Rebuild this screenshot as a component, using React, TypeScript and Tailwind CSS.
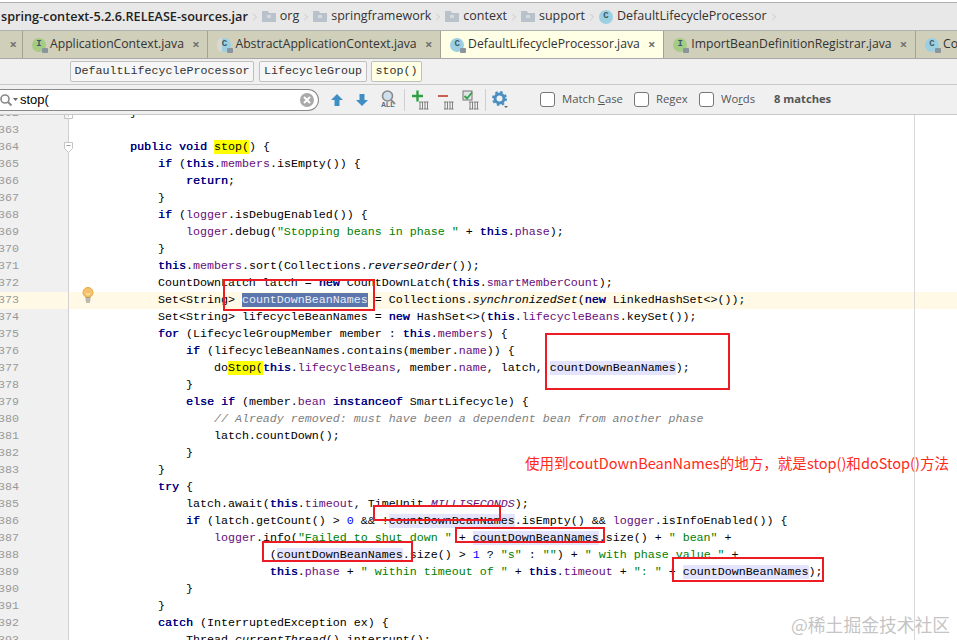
import type { ReactNode } from 'react'
import { ChevronRight } from 'lucide-react'

type Tok = string | [string, string]

const KW = 'text-[#000080] [text-shadow:0.3px_0_0_#000080]'
const FLD = 'text-[#660e7a]'
const STR = 'text-[#008000]'
const NUM = 'text-[#0000ff]'
const ITA = 'italic'
const CMT = 'italic text-[#808080]'
const HIT = 'bg-[#ffff00]'
const USE = 'bg-[#e4e4ff]'
const SEL = 'bg-[#5b76ad] text-[#e8edf8]'

const NAME = 'countDownBeanNames'

const LINES: Tok[][] = [
  ['        }'],
  [],
  ['        ', ['public void ', KW], ['stop(', HIT], ') {'],
  ['            ', ['if ', KW], '(', ['this', KW], '.', ['members', FLD], '.isEmpty()) {'],
  ['                ', ['return', KW], ';'],
  ['            }'],
  ['            ', ['if ', KW], '(', ['logger', FLD], '.isDebugEnabled()) {'],
  ['                ', ['logger', FLD], '.debug(', ['"Stopping beans in phase "', STR], ' + ', ['this', KW], '.', ['phase', FLD], ');'],
  ['            }'],
  ['            ', ['this', KW], '.', ['members', FLD], '.sort(Collections.', ['reverseOrder', ITA], '());'],
  ['            CountDownLatch latch = ', ['new ', KW], 'CountDownLatch(', ['this', KW], '.', ['smartMemberCount', FLD], ');'],
  ['            Set<String> ', [NAME, SEL], ' = Collections.', ['synchronizedSet', ITA], '(', ['new ', KW], 'LinkedHashSet<>());'],
  ['            Set<String> lifecycleBeanNames = ', ['new ', KW], 'HashSet<>(', ['this', KW], '.', ['lifecycleBeans', FLD], '.keySet());'],
  ['            ', ['for ', KW], '(LifecycleGroupMember member : ', ['this', KW], '.', ['members', FLD], ') {'],
  ['                ', ['if ', KW], '(lifecycleBeanNames.contains(member.', ['name', FLD], ')) {'],
  ['                    do', ['Stop(', HIT], ['this', KW], '.', ['lifecycleBeans', FLD], ', member.', ['name', FLD], ', latch, ', [NAME, USE], ');'],
  ['                }'],
  ['                ', ['else if ', KW], '(member.', ['bean ', FLD], ['instanceof ', KW], 'SmartLifecycle) {'],
  ['                    ', ['// Already removed: must have been a dependent bean from another phase', CMT]],
  ['                    latch.countDown();'],
  ['                }'],
  ['            }'],
  ['            ', ['try ', KW], '{'],
  ['                latch.await(', ['this', KW], '.', ['timeout', FLD], ', TimeUnit.', ['MILLISECONDS', `${ITA} ${FLD}`], ');'],
  ['                ', ['if ', KW], '(latch.getCount() > ', ['0', NUM], ' && !', [NAME, USE], '.isEmpty() && ', ['logger', FLD], '.isInfoEnabled()) {'],
  ['                    ', ['logger', FLD], '.info(', ['"Failed to shut down "', STR], ' + ', [NAME, USE], '.size() + ', ['" bean"', STR], ' +'],
  ['                            (', [NAME, USE], '.size() > ', ['1', NUM], ' ? ', ['"s"', STR], ' : ', ['""', STR], ') + ', ['" with phase value "', STR], ' +'],
  ['                            ', ['this', KW], '.', ['phase', FLD], ' + ', ['" within timeout of "', STR], ' + ', ['this', KW], '.', ['timeout', FLD], ' + ', ['": "', STR], ' + ', [NAME, USE], ');'],
  ['                }'],
  ['            }'],
  ['            ', ['catch ', KW], '(InterruptedException ex) {'],
  ['                Thread.', ['currentThread', ITA], '().interrupt();'],
]

function Crumb({ children, icon }: { children: ReactNode; icon?: ReactNode }) {
  return (
    <div className="flex items-center shrink-0">
      {icon}
      <span>{children}</span>
      <ChevronRight className="mx-[1px] h-[24px] w-[12px] text-[#a8a8a8]" strokeWidth={1} />
    </div>
  )
}

function Folder() {
  return (
    <svg width="14" height="11" viewBox="0 0 14 11" className="mr-[4px]">
      <path d="M0 0h6l1 2h7v9H0z" fill="#b9c2ca" />
      <rect x="5" y="4" width="4" height="3" fill="#d5dade" />
    </svg>
  )
}

function ClassIcon({ letter = 'C', tone = '#9ccfe0', lock, split }: { letter?: string; tone?: string; lock?: boolean; split?: boolean }) {
  return (
    <span className="relative mr-[4px] inline-flex h-[14px] w-[14px] shrink-0 items-center justify-center rounded-full" style={{ background: tone }}>
      {split && <span className="absolute left-0 top-0 h-full w-[5px] rounded-l-full bg-[#d8d8d0]" />}
      <span className="relative font-['Liberation_Mono'] text-[9px] font-bold leading-none text-[#3a5a68]">{letter}</span>
      {lock && <span className="absolute bottom-[-1px] right-[-2px] h-[5px] w-[6px] rounded-[1px] bg-[#8a949c]" />}
    </span>
  )
}

function Tab({ name, icon, active }: { name: string; icon: ReactNode; active?: boolean }) {
  return (
    <div className={`flex h-[27px] shrink-0 items-center border-r border-[#a3a394] pl-[9px] pr-[7.5px] ${active ? 'bg-[#ffffe6]' : 'bg-[#d0cfba]'}`}>
      {icon}
      <span className="text-[#333]">{name}</span>
      <span className="ml-[8px] w-[8px] text-center text-[13px] font-bold leading-none text-[#707070]">×</span>
    </div>
  )
}

function NavChip({ children, width, active }: { children: ReactNode; width: string; active?: boolean }) {
  return (
    <span className={`flex h-[21px] items-center justify-center rounded-[2px] border border-[#c0c0c0] font-['Liberation_Mono'] text-[11.67px] text-[#333] ${width} ${active ? 'bg-[#ffffe6]' : 'bg-[#f6f6f6]'}`}>
      {children}
    </span>
  )
}

function Check({ label, width }: { label: ReactNode; width: string }) {
  return (
    <div className={`flex items-center ${width}`}>
      <span className="mr-[7px] h-[15px] w-[15px] rounded-[3px] border border-[#777] bg-white" />
      <span className="text-[11.3px] text-[#555]">{label}</span>
    </div>
  )
}

function Arrow({ up }: { up?: boolean }) {
  return (
    <svg width="14" height="14" viewBox="0 0 14 14">
      <path d={up ? 'M7 1l6 6H9.500v6h-5V7H1z' : 'M7 13l6-6H9.500V1h-5v6H1z'} fill="#3f8fc4" />
    </svg>
  )
}

function RowIcon({ children }: { children: ReactNode }) {
  return (
    <svg width="17" height="20" viewBox="0 0 17 20">
      {children}
      <path d="M8 12v7M10.500 12v7M7 12h4.500M7 19h4.500M13 12v7M15.500 12v7M12 12h4.500M12 19h4.500" stroke="#666" strokeWidth="0.8" fill="none" />
    </svg>
  )
}

function RedBox({ className }: { className: string }) {
  return <div className={`pointer-events-none absolute border-2 border-[#ed1c24] ${className}`} />
}

export default function App() {
  return (
    <div className="relative h-[640px] w-[957px] overflow-hidden bg-white font-['Open_Sans','Liberation_Sans',sans-serif]">
      {/* breadcrumbs */}
      <div className="mt-[2px] flex h-[29px] items-center overflow-hidden border-y border-[#b0b0b0] bg-[#e8e8e8] pl-px text-[12.5px] text-[#333]">
        <Crumb><b className="text-[12.65px] font-semibold text-[#222]">spring-context-5.2.6.RELEASE-sources.jar</b></Crumb>
        <Crumb icon={<Folder />}>org</Crumb>
        <Crumb icon={<Folder />}>springframework</Crumb>
        <Crumb icon={<Folder />}>context</Crumb>
        <Crumb icon={<Folder />}>support</Crumb>
        <Crumb icon={<ClassIcon />}>DefaultLifecycleProcessor</Crumb>
      </div>

      {/* editor tabs */}
      <div className="flex h-[28px] overflow-hidden border-b border-[#a8a8a8] bg-[#d0cfba] text-[12.2px]">
        <div className="flex w-[23px] shrink-0 items-center justify-end border-r border-[#a3a394] pr-[5px] text-[13px] font-bold text-[#707070]">×</div>
        <Tab name="ApplicationContext.java" icon={<ClassIcon letter="I" tone="#a6cb85" lock />} />
        <Tab name="AbstractApplicationContext.java" icon={<ClassIcon split lock />} />
        <Tab name="DefaultLifecycleProcessor.java" icon={<ClassIcon lock />} active />
        <Tab name="ImportBeanDefinitionRegistrar.java" icon={<ClassIcon letter="I" tone="#a6cb85" lock />} />
        <div className="flex items-center pl-[9px]"><ClassIcon lock /><span className="text-[#333]">Co</span></div>
      </div>

      {/* navigation path */}
      <div className="flex h-[26px] items-center border-b border-[#c8c8c8] bg-[#f0f0f0] pl-[70px]">
        <NavChip width="w-[184px]">DefaultLifecycleProcessor</NavChip>
        <span className="w-[5px]" />
        <NavChip width="w-[108px]">LifecycleGroup</NavChip>
        <span className="w-[4px]" />
        <NavChip width="w-[51px]" active>stop()</NavChip>
      </div>

      {/* find bar */}
      <div className="flex h-[30px] items-center border-b border-[#c8c8c8] bg-[#f0f0f0]">
        <div className="flex h-[22px] w-[319px] shrink-0 items-center rounded-r-full border border-l-0 border-[#8a8a8a] bg-white pr-[3px]">
          <svg width="19" height="14" viewBox="0 0 19 14" className="shrink-0">
            <circle cx="5" cy="6" r="4" fill="none" stroke="#888" strokeWidth="1.600" />
            <path d="M8 9l3.500 3.500" stroke="#888" strokeWidth="2" />
            <path d="M13 5h5l-2.500 3z" fill="#666" />
          </svg>
          <span className="ml-[1px] flex-1 font-['Liberation_Sans'] text-[13px] text-black">stop(</span>
          <svg width="16" height="16" viewBox="0 0 16 16">
            <circle cx="8" cy="8" r="7" fill="#aaa" />
            <path d="M5 5l6 6M11 5l-6 6" stroke="#fff" strokeWidth="2" />
          </svg>
        </div>
        <div className="ml-[11px] flex items-center gap-[11px]">
          <Arrow up />
          <Arrow />
          <svg width="17" height="19" viewBox="0 0 17 19">
            <circle cx="7.500" cy="6" r="5" fill="#cfe0ec" stroke="#8a8a8a" strokeWidth="1.600" />
            <path d="M11 10l4 4" stroke="#8a8a8a" strokeWidth="2" />
            <text x="1" y="17" fontSize="7" fontWeight="700" fill="#4a6f8c" fontFamily="Liberation Sans">ALL</text>
          </svg>
        </div>
        <span className="ml-[7px] h-[22px] w-px bg-[#cfcfcf]" />
        <div className="ml-[7px] flex items-center gap-[8px]">
          <RowIcon><path d="M0 6h11M5.500.500v11" stroke="#2f9e44" strokeWidth="2.400" /></RowIcon>
          <RowIcon><path d="M1 6h10" stroke="#c8604f" strokeWidth="2" /></RowIcon>
          <RowIcon>
            <rect x="1" y="1" width="9" height="9" fill="#dfe3e3" stroke="#777" />
            <path d="M2.500 6l2.500 2.500 5-6" stroke="#2f9e44" strokeWidth="1.800" fill="none" />
          </RowIcon>
        </div>
        <span className="ml-[6px] h-[22px] w-px bg-[#cfcfcf]" />
        <svg width="17" height="17" viewBox="0 0 17 17" className="ml-[6px]">
          <circle cx="7.500" cy="7.500" r="4.500" fill="none" stroke="#4a8fc0" strokeWidth="3" />
          <circle cx="7.500" cy="7.500" r="6.500" fill="none" stroke="#4a8fc0" strokeWidth="2" strokeDasharray="2.500 2.600" />
          <path d="M12 15h4l-2 2z" fill="#666" />
        </svg>
        <div className="ml-[31px] flex items-center">
          <Check width="w-[94px]" label={<>Match <u>C</u>ase</>} />
          <Check width="w-[65px]" label={<>Re<u>g</u>ex</>} />
          <Check width="w-[75px]" label={<>Wo<u>r</u>ds</>} />
        </div>
        <span className="text-[11.2px] font-bold text-[#555]">8 matches</span>
      </div>

      {/* editor */}
      <div className="relative h-[525px] overflow-hidden">
        <div className="-mt-[10px] font-['Liberation_Mono'] text-[11.67px] leading-[17px] text-black">
          {LINES.map((line, i) => (
            <div key={i} className={`flex h-[17px] ${i + 362 === 373 ? 'bg-[#fff9e6]' : ''}`}>
              <div className={`h-[17px] w-[69px] shrink-0 overflow-hidden border-r border-[#d0d0d0] ${i + 362 === 373 ? 'bg-[#fff9e6]' : 'bg-[#f0f0f0]'}`}>
                <span className="-ml-[2px] block text-[#999]">{i + 362}</span>
              </div>
              <pre className="ml-[5px] font-['Liberation_Mono'] leading-[17px]">
                {line.map((t, j) =>
                  typeof t === 'string' ? t : <span key={j} className={t[1]}>{t[0]}</span>,
                )}
              </pre>
            </div>
          ))}
        </div>

        {/* right margin guide */}
        <div className="absolute bottom-0 right-[42px] top-0 w-px bg-[#d8d8d8]" />

        {/* fold markers */}
        <svg width="9" height="4" viewBox="0 0 9 4" className="absolute left-[64px] top-0">
          <path d="M.500 3.500h8V0M.500 3.500V0" fill="#fff" stroke="#c4c4c4" />
        </svg>
        <svg width="9" height="11" viewBox="0 0 9 11" className="absolute left-[64px] top-[27px]">
          <path d="M.500.500h8v6l-4 4-4-4z" fill="#fff" stroke="#c4c4c4" />
          <path d="M2.500 3.500h4" stroke="#a0a0a0" />
        </svg>

        {/* bulb */}
        <svg width="12" height="16" viewBox="0 0 12 16" className="absolute left-[82px] top-[172px]">
          <circle cx="6" cy="5.500" r="5" fill="#f4c26a" stroke="#e8a840" />
          <path d="M3.500 6l2.500 2 2.500-2" fill="none" stroke="#fff0c8" />
          <path d="M3.500 11h5M3.500 13h5M4 15h4" stroke="#7d7d7d" strokeWidth="1.200" />
        </svg>
      </div>

      {/* annotations drawn over the screenshot */}
      <RedBox className="left-[223px] top-[279px] h-[32px] w-[152px]" />
      <RedBox className="left-[545px] top-[333px] h-[57px] w-[185px]" />
      <RedBox className="left-[373px] top-[505px] h-[16px] w-[128px]" />
      <RedBox className="left-[455px] top-[527px] h-[16px] w-[150px]" />
      <RedBox className="left-[262px] top-[541px] h-[21px] w-[151px]" />
      <RedBox className="left-[672px] top-[557px] h-[25px] w-[152px]" />
      <div className="absolute left-[525px] top-[453px] whitespace-nowrap font-['Noto_Sans_CJK_SC','Open_Sans',sans-serif] text-[14.55px] leading-[20px] text-[#ff2a1a]">
        使用到coutDownBeanNames的地方，就是stop()和doStop()方法
      </div>
      <div className="absolute left-[791px] top-[612px] whitespace-nowrap font-['Noto_Sans_CJK_SC',sans-serif] text-[17.8px] leading-[24px] text-[#b4b4b4]/80">
        @稀土掘金技术社区
      </div>
    </div>
  )
}
